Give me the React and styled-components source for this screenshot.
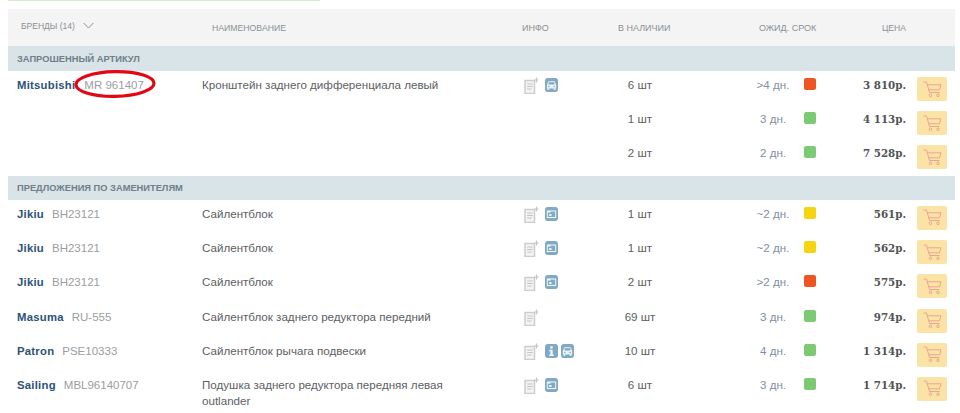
import React from "react";
import styled, { createGlobalStyle } from "styled-components";

const Global = createGlobalStyle`
  html, body { margin: 0; padding: 0; background: #fff; }
  body { font-family: "Liberation Sans", Arial, sans-serif; overflow: hidden; }
`;

const Page = styled.div`
  width: 947px;
  height: 413px;
  margin-left: 8px;
  overflow: hidden;
`;
const Progress = styled.div`
  width: 312px;
  height: 1px;
  background: #d3ebcf;
  margin-bottom: 8px;
`;
const COLS = "194px 313px 75px 100px 110px 30px 76px 49px";
const HeadRow = styled.div`
  display: grid;
  grid-template-columns: ${COLS};
  height: 37px;
  align-items: center;
  background: #f4f4f4;
  color: #8b9095;
  font-size: 9px;
  text-transform: uppercase;
`;
const HeadCell = styled.div`
  padding-left: ${(p) => p.$pad || 0}px;
  margin-top: ${(p) => p.$up || 0}px;
  font-size: ${(p) => p.$size || 9}px;
  grid-column: ${(p) => (p.$span ? `span ${p.$span}` : "auto")};
  display: flex;
  align-items: center;
  justify-content: ${(p) => (p.$align === "right" ? "flex-end" : "flex-start")};
  gap: 8px;
  white-space: nowrap;
`;
const Band = styled.div`
  height: ${(p) => p.$h}px;
  display: flex;
  align-items: center;
  padding-left: 9px;
  background: #d9e4e9;
  color: #6f7e88;
  font-size: 9.3px;
  font-weight: 700;
  text-transform: uppercase;
`;
const Group = styled.div`
  margin-bottom: ${(p) => p.$mb || 0}px;
`;
const Row = styled.div`
  display: grid;
  grid-template-columns: ${COLS};
  min-height: 34.2px;
  padding-top: 6px;
  box-sizing: border-box;
  align-items: start;
  font-size: 11.6px;
  line-height: 16px;
  color: #5a5f63;
`;
const BrandCell = styled.div`
  position: relative;
  padding-left: 9px;
  white-space: nowrap;
`;
const BrandName = styled.span`
  font-size: 11.3px;
  font-weight: 700;
  color: #2d5278;
  letter-spacing: 0.25px;
`;
const Sku = styled.span`
  color: #9a9ea1;
  font-size: 11.5px;
  margin-left: ${(p) => p.$gap ?? 8}px;
`;
const Ring = styled.svg`
  position: absolute;
  left: 65px;
  top: -9px;
  width: 84px;
  height: 32px;
`;
const NameCell = styled.div`
  padding-right: 40px;
  color: #5c6064;
`;
const InfoCell = styled.div`
  display: flex;
  align-items: flex-start;
  padding-left: 9px;
  height: 18px;
  margin-top: 1px;
`;
const Stock = styled.div`
  text-align: center;
  color: #5a5f63;
`;
const Eta = styled.div`
  padding-left: 56px;
  text-align: center;
  color: #7f8fa3;
  white-space: nowrap;
`;
const DotCell = styled.div`
  padding: 1px 0 0 4px;
`;
const Dot = styled.div`
  width: 11.5px;
  height: 12px;
  border-radius: 2px;
  background: ${(p) => p.$c};
`;
const Price = styled.div`
  text-align: right;
  font-family: "DejaVu Serif", serif;
  font-weight: 700;
  font-size: 10.3px;
  color: #4f5356;
  white-space: nowrap;
`;
const CartCell = styled.div`
  padding-left: 11px;
`;
const CartButton = styled.div`
  width: 30px;
  height: 24px;
  border-radius: 2px;
  background: #fbe3a6;
  display: flex;
  align-items: center;
  justify-content: center;
`;
const Badge = styled.svg`
  width: 13px;
  height: 14px;
  margin-left: ${(p) => p.$ml ?? 3}px;
  flex: none;
`;
const DocSvg = styled.svg`
  width: 15px;
  height: 17px;
  flex: none;
  margin-top: -1px;
  margin-right: 3px;
`;

const Chevron = () => (
  <svg width="11" height="7" viewBox="0 0 11 7" fill="none" stroke="#8b9095" strokeWidth="1">
    <path d="M.7 1l4.8 5 4.8-5" />
  </svg>
);
const Doc = () => (
  <DocSvg viewBox="0 0 15 17" fill="none">
    <path d="M1 3.5h9.5v13H1z" fill="#f3f3f3" stroke="#cdcdcd" strokeWidth="1.5" />
    <path d="M3.2 7h5.5M3.2 9.5h5.5M3.2 12h4.5" stroke="#c4c4c4" strokeWidth="1" />
    <path d="M12.5 0.5v5M10.3 3h4.4" stroke="#c4c4c4" strokeWidth="1.2" />
  </DocSvg>
);
const Car = ({ ml }) => (
  <Badge $ml={ml} viewBox="0 0 14 14" preserveAspectRatio="none">
    <rect width="14" height="14" rx="3" fill="#7fa9c4" />
    <path d="M2 7l1.3-3.2c.2-.4.4-.6.9-.6h5.6c.5 0 .7.2.9.6L12 7v3.6H2z" fill="#eef4f7" />
    <rect x="3.8" y="4.2" width="6.4" height="2.3" fill="#7fa9c4" />
    <rect x="2.6" y="10.3" width="2" height="1.6" fill="#eef4f7" />
    <rect x="9.4" y="10.3" width="2" height="1.6" fill="#eef4f7" />
    <circle cx="4.2" cy="8.6" r=".8" fill="#7fa9c4" />
    <circle cx="9.8" cy="8.6" r=".8" fill="#7fa9c4" />
  </Badge>
);
const Photo = ({ ml }) => (
  <Badge $ml={ml} viewBox="0 0 14 14" preserveAspectRatio="none">
    <rect width="14" height="14" rx="3" fill="#7fa9c4" />
    <rect x="2.5" y="4" width="9" height="6.5" fill="none" stroke="#eef4f7" strokeWidth="1.1" />
    <path d="M2.5 4h3.5v1.6h-3.5z" fill="#eef4f7" />
    <rect x="4.5" y="7" width="2.5" height="2" fill="#eef4f7" />
  </Badge>
);
const Info = ({ ml }) => (
  <Badge $ml={ml} viewBox="0 0 14 14" preserveAspectRatio="none">
    <rect width="14" height="14" rx="3" fill="#7fa9c4" />
    <rect x="5.7" y="2.2" width="2.6" height="2.4" fill="#eef4f7" />
    <path d="M4.5 5.8h3.8v4.6h1.2v1.5h-5v-1.5h1.2V7.3H4.5z" fill="#eef4f7" />
  </Badge>
);
const Cart = () => (
  <svg width="19" height="17" viewBox="0 0 19 17" fill="none" stroke="#eaa596" strokeWidth="1">
    <path d="M.5 1h3l3 10.5h10" />
    <path d="M4.4 3.8H18l-1.5 5H5.8" />
    <circle cx="7.5" cy="14.3" r="1.3" />
    <circle cx="15" cy="14.3" r="1.3" />
  </svg>
);

const iconSets = { car: [Car], photo: [Photo], none: [], infocar: [Info, Car], empty: null };

const Offer = ({ brand, sku, gap, ring, name, icons, stock, eta, dot, price }) => (
  <Row>
    <BrandCell>
      {brand && <BrandName>{brand}</BrandName>}
      {sku && <Sku $gap={gap}>{sku}</Sku>}
      {ring && (
        <Ring viewBox="0 0 84 32" fill="none">
          <ellipse cx="42" cy="16" rx="39" ry="12.3" stroke="#e30613" strokeWidth="3.2" transform="rotate(-1 42 16)" />
        </Ring>
      )}
    </BrandCell>
    <NameCell>{name}</NameCell>
    <InfoCell>
      {iconSets[icons] && <Doc />}
      {(iconSets[icons] || []).map((I, i) => <I key={i} />)}
    </InfoCell>
    <Stock>{stock}</Stock>
    <Eta>{eta}</Eta>
    <DotCell><Dot $c={dot} /></DotCell>
    <Price>{price}</Price>
    <CartCell><CartButton><Cart /></CartButton></CartCell>
  </Row>
);

const RED = "#ee5522", GREEN = "#7ccb72", YEL = "#f5d410";

export default function App() {
  return (
    <Page>
      <Global />
      <Progress />
      <HeadRow>
        <HeadCell $pad={13} $up={-4} $size={8.5}>Бренды (14) <Chevron /></HeadCell>
        <HeadCell $pad={10} $size={8.7}>Наименование</HeadCell>
        <HeadCell $pad={7}>Инфо</HeadCell>
        <HeadCell $pad={28}>В наличии</HeadCell>
        <HeadCell $pad={69} $span={2}>Ожид. срок</HeadCell>
        <HeadCell $align="right" $size={8.6}>Цена</HeadCell>
        <div />
      </HeadRow>
      <Band $h={25}>Запрошенный артикул</Band>
      <Group $mb={2.4}>
        <Offer brand="Mitsubishi" sku="MR 961407" gap={9} ring name="Кронштейн заднего дифференциала левый" icons="car" stock="6 шт" eta=">4 дн." dot={RED} price="3 810р." />
        <Offer icons="empty" stock="1 шт" eta="3 дн." dot={GREEN} price="4 113р." />
        <Offer icons="empty" stock="2 шт" eta="2 дн." dot={GREEN} price="7 528р." />
      </Group>
      <Band $h={24}>Предложения по заменителям</Band>
      <Group>
        <Offer brand="Jikiu" sku="BH23121" name="Сайлентблок" icons="photo" stock="1 шт" eta="~2 дн." dot={YEL} price="561р." />
        <Offer brand="Jikiu" sku="BH23121" name="Сайлентблок" icons="photo" stock="1 шт" eta="~2 дн." dot={YEL} price="562р." />
        <Offer brand="Jikiu" sku="BH23121" name="Сайлентблок" icons="photo" stock="2 шт" eta=">2 дн." dot={RED} price="575р." />
        <Offer brand="Masuma" sku="RU-555" name="Сайлентблок заднего редуктора передний" icons="none" stock="69 шт" eta="3 дн." dot={GREEN} price="974р." />
        <Offer brand="Patron" sku="PSE10333" name="Сайлентблок рычага подвески" icons="infocar" stock="10 шт" eta="4 дн." dot={GREEN} price="1 314р." />
        <Offer brand="Sailing" sku="MBL96140707" name="Подушка заднего редуктора передняя левая outlander" icons="photo" stock="6 шт" eta="3 дн." dot={GREEN} price="1 714р." />
      </Group>
    </Page>
  );
}
